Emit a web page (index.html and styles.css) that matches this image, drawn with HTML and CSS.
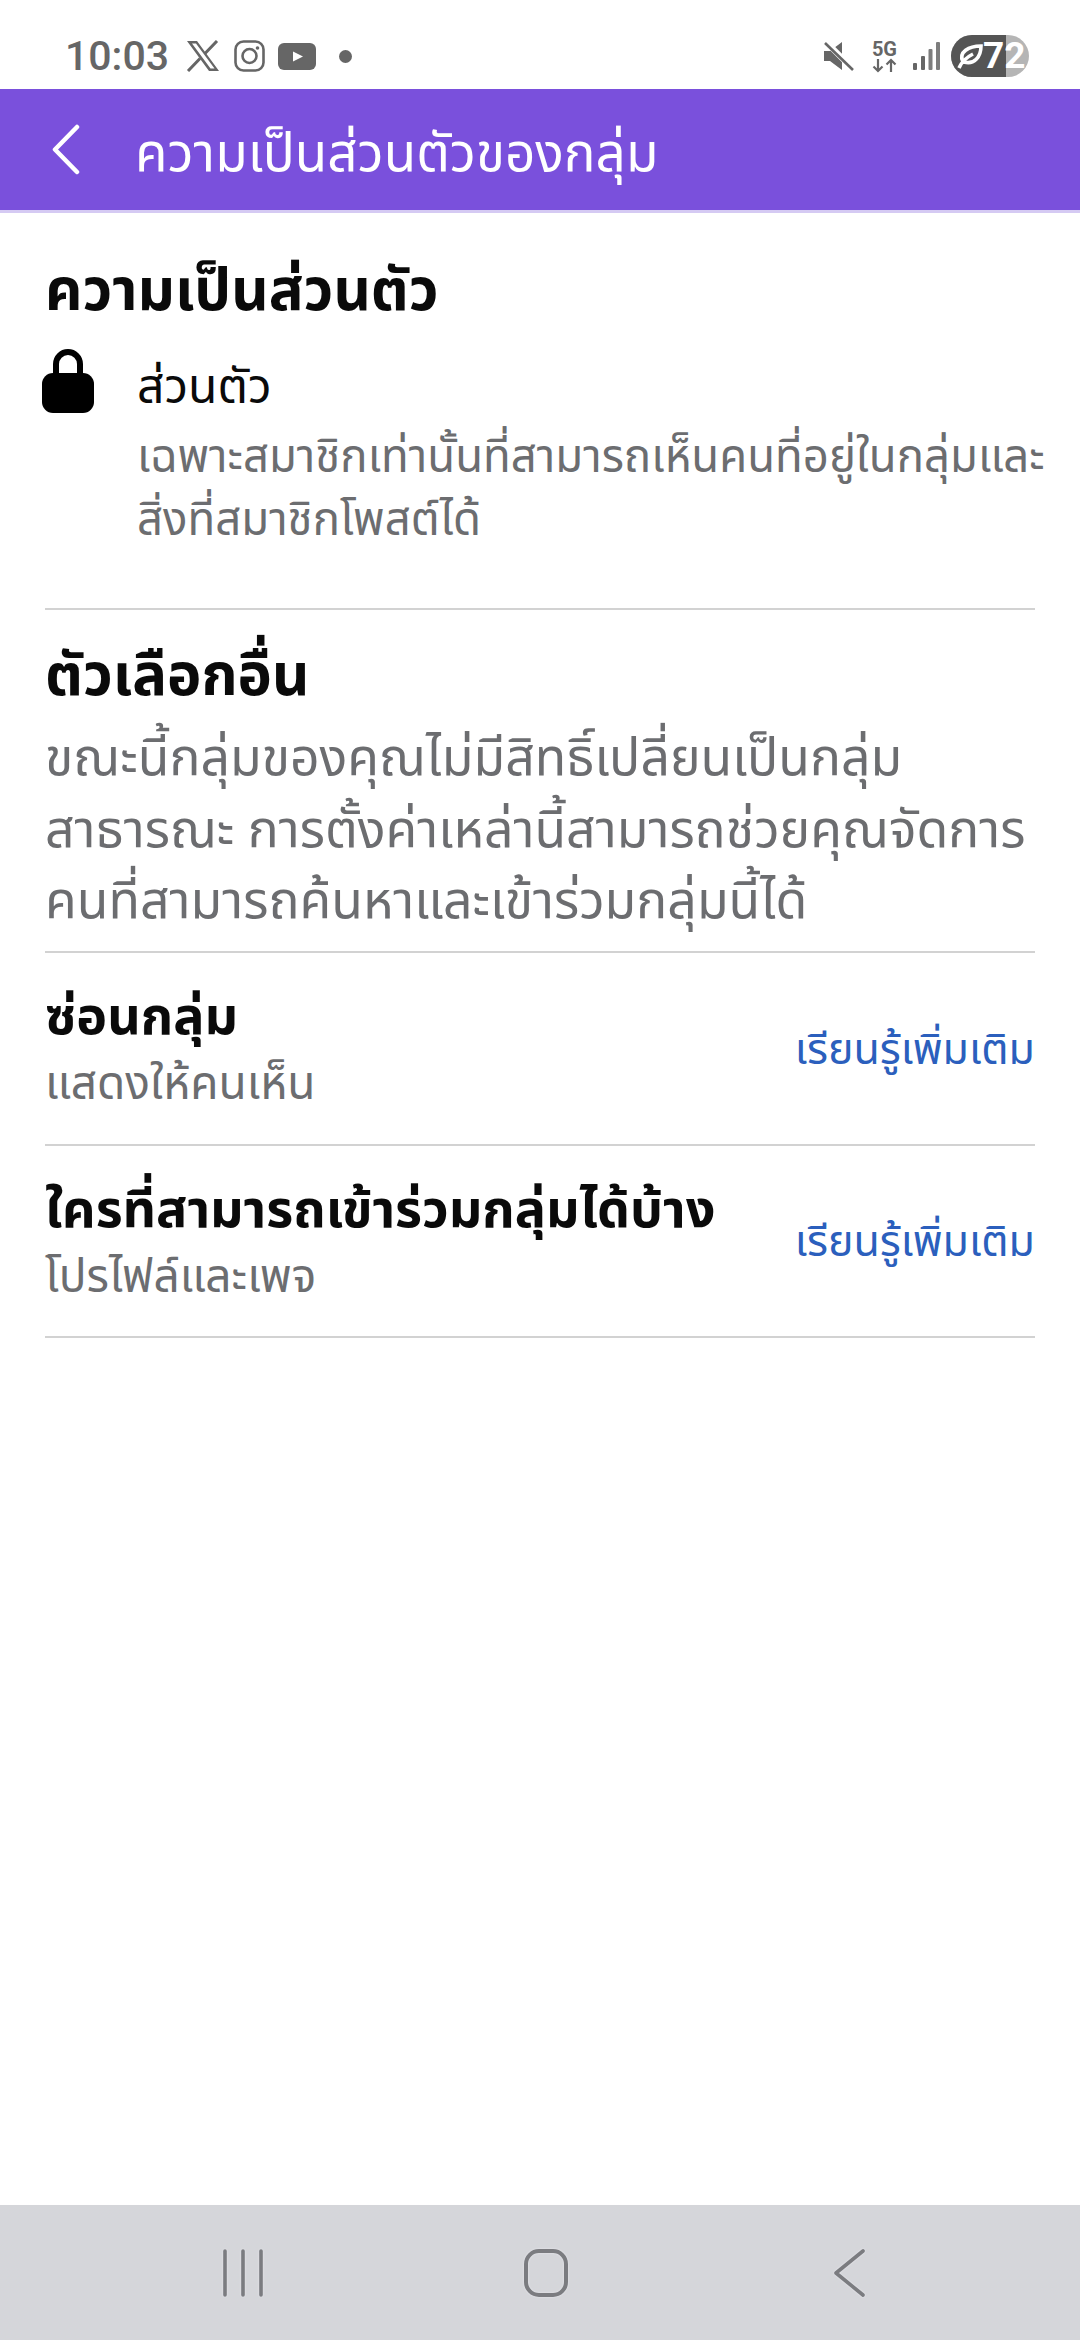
FILE: index.html
```html
<!DOCTYPE html>
<html lang="th">
<head>
  <meta charset="UTF-8">
  <meta name="viewport" content="width=device-width, initial-scale=1.0">
  <title>ความเป็นส่วนตัวของกลุ่ม</title>
  <link rel="stylesheet" href="styles.css">
</head>
<body>
  <div class="phone">
    <!-- Status bar -->
    <div class="status-bar">
      <div class="status-left">
        <span class="clock">10:03</span>
        <svg class="ic-x" width="34" height="32" viewBox="0 0 34 32">
          <path d="M1 1h10l22 30H23zM6 3.500l18.500 25h4L10 3.500z" fill="#666" fill-rule="evenodd"/>
          <path d="M31 1L19 13.500M14 18.500L2 31" stroke="#666" stroke-width="3" fill="none"/>
        </svg>
        <svg class="ic-insta" width="31" height="32" viewBox="0 0 31 32">
          <rect x="1.500" y="1.500" width="28" height="29" rx="8" fill="none" stroke="#666" stroke-width="2.600"/>
          <circle cx="15.500" cy="16" r="7" fill="none" stroke="#666" stroke-width="2.600"/>
          <circle cx="23.500" cy="8" r="1.800" fill="#666"/>
        </svg>
        <svg class="ic-yt" width="38" height="27" viewBox="0 0 38 27">
          <rect x="0" y="0" width="38" height="27" rx="6" fill="#666"/>
          <path d="M15 8.500l10 5-10 5z" fill="#fff"/>
        </svg>
        <span class="dot"></span>
      </div>
      <div class="status-right">
        <svg width="30" height="30" viewBox="0 0 30 30">
          <path d="M0 10h6l12-9v28L6 20H0z" fill="#666"/>
          <path d="M2 1l28 28" stroke="#fff" stroke-width="6"/>
          <path d="M1 2l28 27" stroke="#666" stroke-width="2.600"/>
        </svg>
        <div class="net">
          <span class="net-label">5G</span>
          <svg width="25" height="15" viewBox="0 0 25 15">
            <path d="M6 1v12M1.500 8.500L6 13l4.500-4.500M19 14V2M14.500 6.500L19 2l4.500 4.500" stroke="#666" stroke-width="2.200" fill="none"/>
          </svg>
        </div>
        <svg class="signal" width="27" height="28" viewBox="0 0 27 28">
          <g fill="#666">
            <rect x="0" y="21" width="4" height="7" rx="1"/>
            <rect x="8" y="14" width="4" height="14" rx="1"/>
            <rect x="15.500" y="7" width="4" height="21" rx="1" opacity=".85"/>
            <rect x="23" y="0" width="4" height="28" rx="1" opacity=".85"/>
          </g>
        </svg>
        <div class="battery">
          <div class="battery-fill"></div>
          <svg class="leaf" width="26" height="28" viewBox="0 0 26 28">
            <path d="M2 26C5 19 10 15 16 12M6 20C1 10 12 4 24 4 24 15 17 23 7 20" fill="none" stroke="#fff" stroke-width="3.600"/>
          </svg>
          <span class="battery-num">72</span>
        </div>
      </div>
    </div>

    <!-- Title bar -->
    <div class="app-bar">
      <svg class="back" width="28" height="51" viewBox="0 0 28 51">
        <path d="M25 3L3 25.500 25 48" fill="none" stroke="#fff" stroke-width="4.500" stroke-linecap="round" stroke-linejoin="round"/>
      </svg>
      <h1 class="app-title">ความเป็นส่วนตัวของกลุ่ม</h1>
    </div>

    <div class="content">
      <section class="privacy">
        <h2 class="heading">ความเป็นส่วนตัว</h2>
        <div class="privacy-row">
          <svg class="lock" width="52" height="64" viewBox="0 0 52 64">
            <path d="M14 28V15a12 12 0 0 1 24 0v13" fill="none" stroke="#000" stroke-width="6"/>
            <rect x="0" y="24" width="52" height="40" rx="11" fill="#000"/>
          </svg>
          <div class="privacy-text">
            <div class="privacy-name">ส่วนตัว</div>
            <p class="privacy-desc">เฉพาะสมาชิกเท่านั้นที่สามารถเห็นคนที่อยู่ในกลุ่มและ<br>สิ่งที่สมาชิกโพสต์ได้</p>
          </div>
        </div>
      </section>

      <section class="other">
        <h2 class="heading">ตัวเลือกอื่น</h2>
        <p class="other-desc">ขณะนี้กลุ่มของคุณไม่มีสิทธิ์เปลี่ยนเป็นกลุ่ม<br>สาธารณะ การตั้งค่าเหล่านี้สามารถช่วยคุณจัดการ<br>คนที่สามารถค้นหาและเข้าร่วมกลุ่มนี้ได้</p>
      </section>

      <div class="row">
        <div>
          <div class="row-title">ซ่อนกลุ่ม</div>
          <div class="row-sub">แสดงให้คนเห็น</div>
        </div>
        <a class="row-link">เรียนรู้เพิ่มเติม</a>
      </div>
      <div class="row">
        <div>
          <div class="row-title">ใครที่สามารถเข้าร่วมกลุ่มได้บ้าง</div>
          <div class="row-sub">โปรไฟล์และเพจ</div>
        </div>
        <a class="row-link">เรียนรู้เพิ่มเติม</a>
      </div>
    </div>

    <!-- Nav bar -->
    <div class="nav-bar">
      <svg width="44" height="50" viewBox="0 0 44 50">
        <path d="M4 3v44M22 3v44M40 3v44" stroke="#7b7c80" stroke-width="3.600" stroke-linecap="round"/>
      </svg>
      <svg width="44" height="50" viewBox="0 0 44 50">
        <rect x="2" y="3" width="40" height="44" rx="13" fill="none" stroke="#7b7c80" stroke-width="4"/>
      </svg>
      <svg width="44" height="50" viewBox="0 0 44 50">
        <path d="M36 3L9 25l27 22" fill="none" stroke="#7b7c80" stroke-width="3.600" stroke-linecap="round" stroke-linejoin="round"/>
      </svg>
    </div>
  </div>
</body>
</html>
```

FILE: styles.css
```css
* {
  box-sizing: border-box;
}

body {
  margin: 0;
  background: #fff;
  font-family: "Noto Sans", "Noto Sans Thai", "DejaVu Sans", Roboto, sans-serif;
}

.phone {
  width: 1080px;
  height: 2340px;
  display: flex;
  flex-direction: column;
}

.status-bar {
  height: 89px;
  padding: 23px 51px 0 65px;
  display: flex;
  justify-content: space-between;
  align-items: center;
  flex-shrink: 0;
}

.status-left,
.status-right {
  display: flex;
  align-items: center;
}

.clock {
  width: 121px;
  font-family: Roboto, sans-serif;
  font-size: 41px;
  font-weight: 500;
  color: #666;
}

.ic-insta {
  margin-left: 14px;
}

.ic-yt {
  margin-left: 13px;
}

.dot {
  width: 13px;
  height: 13px;
  border-radius: 50%;
  background: #666;
  margin-left: 23px;
}

.status-right svg {
  display: block;
}

.net {
  margin: 0 16px 0 18px;
  display: flex;
  flex-direction: column;
  align-items: center;
}

.net-label {
  font-family: Roboto, sans-serif;
  font-size: 20px;
  font-weight: 700;
  line-height: 18px;
  color: #666;
}

.battery {
  width: 78px;
  height: 42px;
  margin-left: 11px;
  border-radius: 21px;
  background: #b5b5b5;
  position: relative;
  overflow: hidden;
}

.battery-fill {
  position: absolute;
  left: 0;
  top: 0;
  bottom: 0;
  width: 55px;
  background: #555;
}

.leaf {
  position: absolute;
  left: 6px;
  top: 7px;
}

.battery-num {
  position: absolute;
  left: 32px;
  top: 0;
  font-family: Roboto, sans-serif;
  font-size: 37px;
  line-height: 42px;
  font-weight: 700;
  color: #fff;
}

.app-bar {
  height: 124px;
  background: #7a50dc;
  border-bottom: 3px solid #d5caf3;
  padding-left: 52px;
  display: flex;
  align-items: center;
  flex-shrink: 0;
}

.app-title {
  margin: 9px 0 0 55px;
  font-size: 53px;
  font-weight: 400;
  color: #fff;
}

.content {
  flex: 1;
  padding: 0 45px;
}

.privacy {
  height: 397px;
  padding-top: 41px;
  border-bottom: 2px solid #d2d2d2;
}

.heading {
  margin: 0;
  font-size: 58px;
  line-height: 68px;
  font-weight: 700;
  color: #0a0a0a;
}

.privacy-row {
  display: flex;
  margin-top: 27px;
}

.lock {
  flex-shrink: 0;
  margin-left: -3px;
}

.privacy-text {
  margin-left: 43px;
  margin-right: -20px;
}

.privacy-name {
  font-size: 48px;
  line-height: 60px;
  color: #0a0a0a;
  margin-top: 6px;
}

.privacy-desc {
  margin: 8px 0 0;
  font-size: 45.5px;
  line-height: 63px;
  color: #6c6d70;
  white-space: nowrap;
}

.other {
  height: 343px;
  padding-top: 29px;
  border-bottom: 2px solid #d2d2d2;
}

.other-desc {
  margin: 13px 0 0;
  font-size: 51.7px;
  line-height: 71.5px;
  color: #6c6d70;
  white-space: nowrap;
}

.row {
  height: 192.5px;
  display: flex;
  justify-content: space-between;
  align-items: center;
  border-bottom: 2px solid #d2d2d2;
}

.row-title {
  font-size: 52px;
  line-height: 67px;
  font-weight: 700;
  color: #0a0a0a;
}

.row-sub {
  font-size: 46px;
  line-height: 69px;
  color: #6c6d70;
}

.row-link {
  padding-top: 4px;
  font-size: 43px;
  color: #2b5fbd;
}

.nav-bar {
  height: 135px;
  background: #d5d6da;
  padding: 0 209px 0 221px;
  display: flex;
  justify-content: space-between;
  align-items: center;
  flex-shrink: 0;
}

.nav-bar svg {
  filter: drop-shadow(0 0 1px #e9e9ee);
}
```
